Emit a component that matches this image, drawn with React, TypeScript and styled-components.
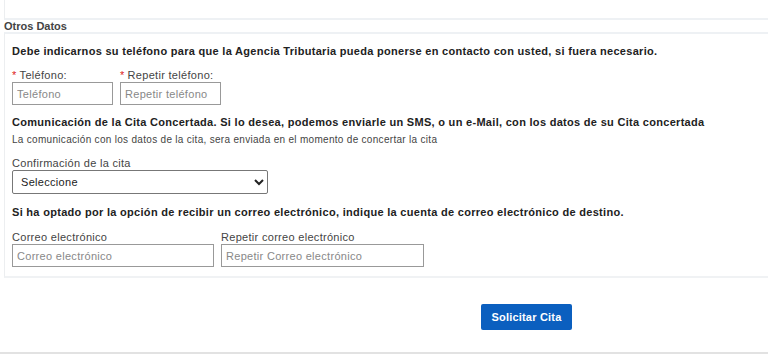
import React from 'react';
import styled, { createGlobalStyle } from 'styled-components';

const GlobalStyle = createGlobalStyle`
  html, body {
    margin: 0;
    padding: 0;
    background: #fff;
    font-family: 'Liberation Sans', Arial, sans-serif;
    color: #333;
    letter-spacing: 0.3px;
  }
`;

const Page = styled.div`
  width: 768px;
  height: 354px;
  overflow: hidden;
  display: flex;
  flex-direction: column;
  border-bottom: 2px solid #e2e2e2;
  box-sizing: border-box;
`;

const TopBox = styled.div`
  height: 18px;
  margin-left: 4px;
  border-left: 1px solid #eceef0;
  border-bottom: 2px solid #eef1f4;
`;

const Legend = styled.div`
  margin-left: 4px;
  height: 12px;
  font-size: 11px;
  font-weight: bold;
  line-height: 12px;
  color: #444;
  letter-spacing: 0;
`;

const Fieldset = styled.div`
  margin: 0 0 0 4px;
  height: 246px;
  box-sizing: border-box;
  border-top: 2px solid #eef1f4;
  border-left: 1px solid #eceef0;
  border-bottom: 2px solid #f0f2f4;
  padding: 10px 8px 0 7px;
  display: flex;
  flex-direction: column;
`;

const Notice = styled.p<{ $top?: number }>`
  margin: ${p => p.$top ?? 0}px 0 0;
  font-size: 11px;
  font-weight: bold;
  color: #222;
  line-height: 14px;
`;

const Hint = styled.p`
  margin: 5px 0 0;
  font-size: 10px;
  color: #444;
  line-height: 12px;
`;

const Row = styled.div<{ $top: number; $gap: number }>`
  display: flex;
  gap: ${p => p.$gap}px;
  margin-top: ${p => p.$top}px;
`;

const Field = styled.label`
  display: flex;
  flex-direction: column;
  gap: 1px;
`;

const Label = styled.span`
  font-size: 11px;
  color: #444;
  line-height: 12px;
`;

const Req = styled.span`
  color: #d22;
  margin-right: 3px;
`;

const Input = styled.input<{ $w: number }>`
  width: ${p => p.$w}px;
  height: 23px;
  box-sizing: border-box;
  border: 1px solid #999;
  padding: 0 4px;
  font-family: 'Liberation Sans', Arial, sans-serif;
  font-size: 11px;
  letter-spacing: 0.3px;
  color: #333;
  &::placeholder {
    color: #888;
  }
`;

const Select = styled.select`
  width: 256px;
  height: 24px;
  box-sizing: border-box;
  border: 1px solid #777;
  border-radius: 2px;
  padding: 0 4px;
  font-family: 'Liberation Sans', Arial, sans-serif;
  font-size: 11px;
  letter-spacing: 0.3px;
  color: #222;
  background: #fff;
`;

const Actions = styled.div`
  display: flex;
  justify-content: flex-start;
  padding: 26px 0 0 481px;
`;

const Button = styled.button`
  width: 91px;
  height: 26px;
  border: none;
  border-radius: 2px;
  background: #0b5fbf;
  color: #fff;
  font-family: 'Liberation Sans', Arial, sans-serif;
  font-size: 11px;
  font-weight: bold;
  letter-spacing: 0.2px;
`;

export default function App() {
  return (
    <>
      <GlobalStyle />
      <Page>
        <TopBox />
        <Legend>Otros Datos</Legend>
        <Fieldset>
          <Notice>
            Debe indicarnos su teléfono para que la Agencia Tributaria pueda ponerse en contacto con usted, si fuera necesario.
          </Notice>
          <Row $top={11} $gap={7}>
            <Field>
              <Label><Req>*</Req>Teléfono:</Label>
              <Input $w={101} placeholder="Teléfono" />
            </Field>
            <Field>
              <Label><Req>*</Req>Repetir teléfono:</Label>
              <Input $w={101} placeholder="Repetir teléfono" />
            </Field>
          </Row>
          <Notice $top={10}>
            Comunicación de la Cita Concertada. Si lo desea, podemos enviarle un SMS, o un e-Mail, con los datos de su Cita concertada
          </Notice>
          <Hint>La comunicación con los datos de la cita, sera enviada en el momento de concertar la cita</Hint>
          <Row $top={11} $gap={0}>
            <Field>
              <Label>Confirmación de la cita</Label>
              <Select defaultValue="">
                <option value="">Seleccione</option>
              </Select>
            </Field>
          </Row>
          <Notice $top={11}>
            Si ha optado por la opción de recibir un correo electrónico, indique la cuenta de correo electrónico de destino.
          </Notice>
          <Row $top={12} $gap={7}>
            <Field>
              <Label>Correo electrónico</Label>
              <Input $w={202} placeholder="Correo electrónico" />
            </Field>
            <Field>
              <Label>Repetir correo electrónico</Label>
              <Input $w={203} placeholder="Repetir Correo electrónico" />
            </Field>
          </Row>
        </Fieldset>
        <Actions>
          <Button>Solicitar Cita</Button>
        </Actions>
      </Page>
    </>
  );
}
